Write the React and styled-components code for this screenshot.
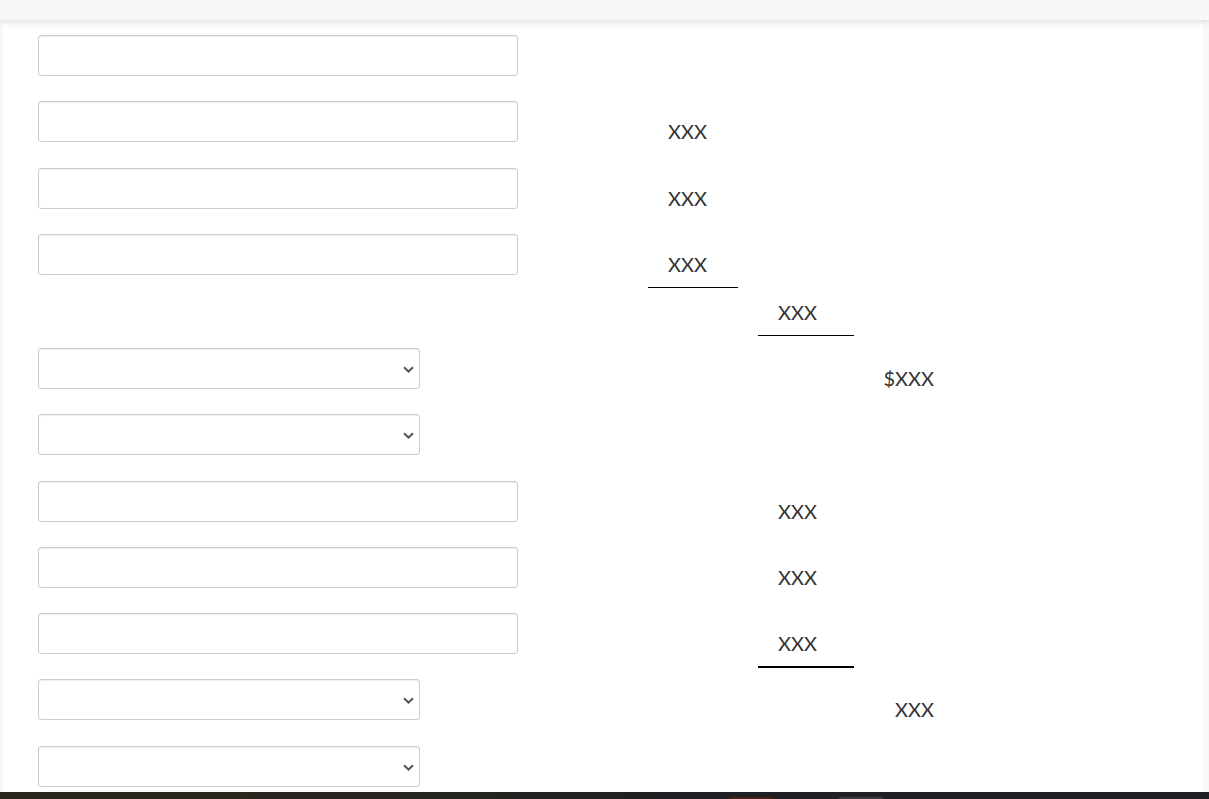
import React from "react";
import styled, { createGlobalStyle } from "styled-components";

const Global = createGlobalStyle`
  html, body { margin: 0; padding: 0; }
  body {
    background: #f8f8f8;
    font-family: Lato, "Open Sans", "Liberation Sans", sans-serif;
    color: #333;
    overflow: hidden;
  }
  * { box-sizing: border-box; }
`;

const Header = styled.header`
  position: relative;
  z-index: 2;
  height: 20px;
  background: #f8f8f8;
  box-shadow: 0 2px 7px rgba(0, 0, 0, 0.13);
`;

const Main = styled.main`
  background: #fff;
  margin: 0 6px 0 3px;
  padding: 15px 0 0 35px;
`;

const Row = styled.div`
  display: flex;
  align-items: flex-start;
  height: ${(p) => p.$h}px;
`;

const ControlArea = styled.div`
  width: 610px;
  flex: none;
`;

const TextInput = styled.input`
  display: block;
  width: 480px;
  height: 41px;
  border: 1px solid #ccc;
  border-radius: 3px;
  box-shadow: inset 0 1px 1px rgba(0, 0, 0, 0.075);
  background: #fff;
  padding: 6px 12px;
  font: inherit;
  font-size: 16px;
`;

const SelectWrap = styled.div`
  position: relative;
  width: 382px;
  height: 41px;
`;

const Select = styled.select`
  display: block;
  width: 100%;
  height: 100%;
  appearance: none;
  -webkit-appearance: none;
  border: 1px solid #ccc;
  border-radius: 3px;
  box-shadow: inset 0 1px 1px rgba(0, 0, 0, 0.075);
  background: #fff;
  padding: 6px 12px;
  font: inherit;
  font-size: 16px;
`;

const Chevron = styled.svg`
  position: absolute;
  right: 6px;
  top: 50%;
  margin-top: -3px;
  width: 11px;
  height: 7px;
  pointer-events: none;
`;

const Cells = styled.div`
  display: grid;
  grid-template-columns: 90px 96px 80px;
  column-gap: 20px;
  align-items: start;
`;

const Cell = styled.div`
  padding: ${(p) => p.$pt}px 20px 9px ${(p) => (p.$right ? 0 : 20)}px;
  line-height: 28px;
  min-height: 1px;
  font-size: 20px;
  color: #333;
  text-align: ${(p) => (p.$right ? "right" : "left")};
  border-bottom: ${(p) => (p.$rule ? `${p.$rule}px solid #000` : "none")};
  white-space: nowrap;
`;

const Footer = styled.footer`
  height: 40px;
  margin: 0;
  background: linear-gradient(90deg, #2b261f 0%, #26241f 35%, #1f2023 55%, #1e2024 100%);
  display: flex;
  justify-content: flex-start;
  padding: 5px 0 0 728px;
  gap: 64px;
`;

const FooterButton = styled.span`
  display: block;
  width: 46px;
  height: 24px;
  border-radius: 4px;
  background: ${(p) => p.$bg};
`;

const rows = [
  { c: "input" },
  { c: "input", cells: { 1: { t: "XXX" } } },
  { c: "input", cells: { 1: { t: "XXX" } } },
  { c: "input", h: 54, cells: { 1: { t: "XXX", rule: 1 } } },
  { h: 60, pt: 10, cells: { 2: { t: "XXX", rule: 1 } } },
  { c: "select", cells: { 3: { t: "$XXX" } } },
  { c: "select" },
  { c: "input", cells: { 2: { t: "XXX" } } },
  { c: "input", cells: { 2: { t: "XXX" } } },
  { c: "input", cells: { 2: { t: "XXX", rule: 2 } } },
  { c: "select", cells: { 3: { t: "XXX" } } },
  { c: "select", h: 46 },
];

const defaultHeights = [66, 67, 66, 54, 60, 66, 67, 66, 66, 66, 67, 46];

function Control({ kind }) {
  if (kind === "input") return <TextInput type="text" />;
  if (kind === "select")
    return (
      <SelectWrap>
        <Select defaultValue="">
          <option value=""></option>
        </Select>
        <Chevron viewBox="0 0 11 7">
          <path d="M1 1.2 L5.5 5.5 L10 1.2" fill="none" stroke="#555" strokeWidth="2" />
        </Chevron>
      </SelectWrap>
    );
  return null;
}

export default function App() {
  return (
    <>
      <Global />
      <Header />
      <Main>
        {rows.map((r, i) => {
          const h = r.h || defaultHeights[i];
          const pt = r.pt ?? 16;
          return (
            <Row key={i} $h={h}>
              <ControlArea>
                <Control kind={r.c} />
              </ControlArea>
              <Cells>
                {[1, 2, 3].map((col) => {
                  const cell = r.cells && r.cells[col];
                  return (
                    <Cell key={col} $pt={pt} $right={col === 3} $rule={cell && cell.rule}>
                      {cell ? cell.t : ""}
                    </Cell>
                  );
                })}
              </Cells>
            </Row>
          );
        })}
      </Main>
      <Footer>
        <FooterButton $bg="#4a1f20" />
        <FooterButton $bg="#3a3a3c" />
      </Footer>
    </>
  );
}
